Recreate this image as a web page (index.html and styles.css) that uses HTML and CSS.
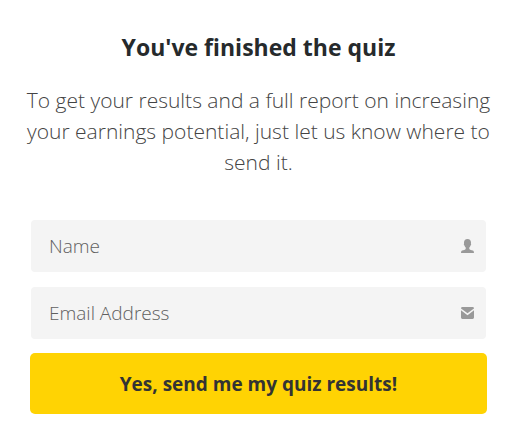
FILE: index.html
```html
<!DOCTYPE html>
<html lang="en">
<head>
<meta charset="utf-8">
<meta name="viewport" content="width=device-width, initial-scale=1">
<title>Quiz results</title>
<link rel="stylesheet" href="styles.css">
</head>
<body>
<main class="quiz">
  <h1 class="title">You've finished the quiz</h1>
  <p class="intro">To get your results and a full report on increasing your earnings potential, just let us know where to send it.</p>
  <form class="form">
    <label class="field">
      <input class="input" type="text" name="name" placeholder="Name" aria-label="Name">
      <svg class="icon" viewBox="0 0 13 14" aria-hidden="true"><path d="M6.500 0C4.200 0 3 1.500 3 3.600c0 .5 0 .8.100 1.100-.5.300-.2 1.500.4 1.700.3 1 .6 1.700 1.200 2.200v1.300c-.4.900-2.200 1.100-3.500 1.700C.4 12 .1 12.700 0 14h13c-.1-1.300-.4-2-1.200-2.400-1.300-.6-3.100-.8-3.500-1.700V8.600c.6-.5.900-1.200 1.200-2.200.6-.2.900-1.400.4-1.700.1-.3.100-.6.100-1.100C10 1.500 8.800 0 6.500 0z"/></svg>
    </label>
    <label class="field">
      <input class="input" type="email" name="email" placeholder="Email Address" aria-label="Email Address">
      <svg class="icon" viewBox="0 0 13 14" aria-hidden="true"><path d="M0 2.400Q0 1 1.400 1h10.200Q13 1 13 2.400L6.500 7.300z"/><path d="M0 4.200l6.500 5 6.500-5v7.400q0 1.400-1.400 1.400H1.400Q0 13 0 11.600z"/></svg>
    </label>
    <button class="submit" type="submit">Yes, send me my quiz results!</button>
  </form>
</main>
</body>
</html>
```
FILE: styles.css
```css
* {
  box-sizing: border-box;
}

body {
  margin: 0;
  background: #fff;
  font-family: "Open Sans", "Noto Sans", sans-serif;
}

.quiz {
  padding: 31px 38px 20px 30px;
  text-align: center;
}

.title {
  margin: 0 0 22px;
  color: #262a2c;
  font-size: 23px;
  font-weight: 700;
  line-height: 32px;
}

.intro {
  margin: 0 -8px 42px;
  color: #444;
  font-size: 21px;
  font-weight: 300;
  line-height: 31px;
}

.form {
  display: flex;
  flex-direction: column;
}

.field {
  position: relative;
  display: flex;
  margin: 0 1px 15px;
}

.field:last-of-type {
  margin-bottom: 14px;
}

.input {
  flex: 1;
  min-width: 0;
  height: 52px;
  padding: 0 40px 0 18px;
  border: 0;
  border-radius: 4px;
  background: #f4f4f4;
  color: #333;
  font: 300 19px "Open Sans", "Noto Sans", sans-serif;
}

.input::placeholder {
  color: #606060;
  opacity: 1;
}

.icon {
  position: absolute;
  top: 19px;
  right: 12px;
  width: 13px;
  height: 14px;
  fill: #999;
}

.submit {
  height: 61px;
  border: 0;
  border-radius: 5px;
  background: #ffd303;
  color: #333;
  font: 700 19px "Open Sans", "Noto Sans", sans-serif;
  cursor: pointer;
}
```
